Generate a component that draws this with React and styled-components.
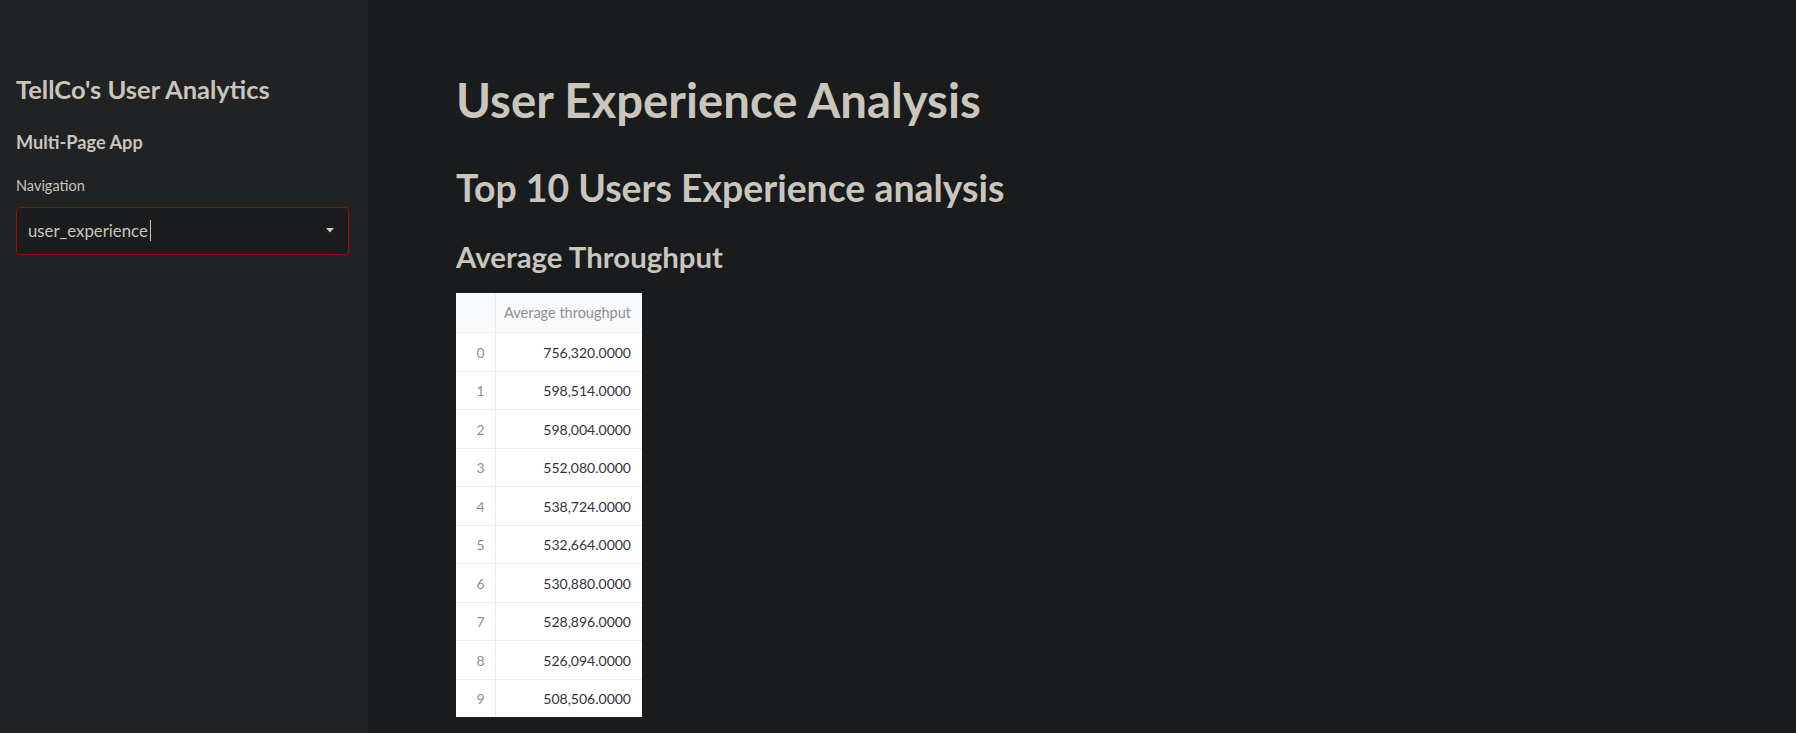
import React from 'react';
import styled, { createGlobalStyle } from 'styled-components';

const GlobalStyle = createGlobalStyle`
html, body {
    margin: 0;
    padding: 0;
    background: #1a1b1d;
}
body {
    font-family: "Lato", "Noto Sans", sans-serif;
    color: #c9c4bc;
}
`;

const Page = styled.div`
display: flex;
min-height: 733px;
width: 1796px;
`;

const Sidebar = styled.aside`
width: 368px;
flex-shrink: 0;
background: #212224;
padding: 74px 19px 0 16px;
box-sizing: border-box;
`;

const SideTitle = styled.h2`
margin: 0;
font-size: 25.5px;
line-height: 1.2;
font-weight: 700;
color: #c9c4bc;
`;

const SideSubtitle = styled.h3`
margin: 27px 0 0;
font-size: 18.2px;
line-height: 1.2;
font-weight: 700;
color: #c9c4bc;
`;

const Label = styled.div`
margin-top: 24px;
font-size: 14.5px;
line-height: 1.2;
color: #c9c4bc;
`;

const Select = styled.div`
margin-top: 12px;
height: 48px;
box-sizing: border-box;
border: 1px solid #9b0b0b;
border-radius: 4px;
background: #1b1c1e;
display: flex;
align-items: center;
padding: 0 14px 0 11px;
font-size: 16.8px;
color: #c9c4bc;
`;

const Value = styled.span`
flex: 1;
display: flex;
align-items: center;
`;

const Cursor = styled.span`
display: inline-block;
width: 1px;
height: 21px;
margin-left: 2px;
background: #c9c4bc;
`;

const Main = styled.main`
flex: 1;
padding: 72px 0 0 88px;
`;

const H1 = styled.h1`
margin: 0;
font-size: 47.3px;
line-height: 1.2;
font-weight: 700;
color: #cac6be;
`;

const H2 = styled.h2`
margin: 37px 0 0;
font-size: 37.4px;
line-height: 1.2;
font-weight: 700;
color: #cac6be;
`;

const H3 = styled.h3`
margin: 28px 0 0;
font-size: 29.4px;
line-height: 1.2;
font-weight: 700;
color: #cac6be;
`;

const Table = styled.table`
margin-top: 19px;
border-collapse: collapse;
background: #ffffff;
font-size: 14px;
width: 186px;
`;

const HeadCell = styled.th`
height: 40px;
padding: 0 11px 0 8px;
background: #f8f9fb;
color: #8d8f98;
font-size: 14.5px;
font-weight: 400;
text-align: right;
white-space: nowrap;
border-left: ${p => (p.$index ? 'none' : '1px solid #ebedf0')};
width: ${p => (p.$index ? '39px' : 'auto')};
box-sizing: border-box;
`;

const Row = styled.tr`
border-top: 1px solid #ebedf0;
`;

const Cell = styled.td`
height: 37.5px;
padding: 0 ${p => (p.$index ? '10px' : '11px')} 0 0;
text-align: right;
color: ${p => (p.$index ? '#8d8f98' : '#31333f')};
border-left: ${p => (p.$index ? 'none' : '1px solid #ebedf0')};
white-space: nowrap;
`;

const Caret = () => (
    <svg width="8" height="5" viewBox="0 0 8 5">
        <path d="M0 0 L8 0 L4 4.5 Z" fill="#d2cec7" />
    </svg>
);

const values = [
    '756,320.0000',
    '598,514.0000',
    '598,004.0000',
    '552,080.0000',
    '538,724.0000',
    '532,664.0000',
    '530,880.0000',
    '528,896.0000',
    '526,094.0000',
    '508,506.0000',
];

export default function App() {
    return (
        <Page>
            <GlobalStyle />
            <Sidebar>
                <SideTitle>TellCo's User Analytics</SideTitle>
                <SideSubtitle>Multi-Page App</SideSubtitle>
                <Label>Navigation</Label>
                <Select>
                    <Value>
                        user_experience
                        <Cursor />
                    </Value>
                    <Caret />
                </Select>
            </Sidebar>
            <Main>
                <H1>User Experience Analysis</H1>
                <H2>Top 10 Users Experience analysis</H2>
                <H3>Average Throughput</H3>
                <Table>
                    <thead>
                        <tr>
                            <HeadCell $index></HeadCell>
                            <HeadCell>Average throughput</HeadCell>
                        </tr>
                    </thead>
                    <tbody>
                        {values.map((v, i) => (
                            <Row key={i}>
                                <Cell $index>{i}</Cell>
                                <Cell>{v}</Cell>
                            </Row>
                        ))}
                    </tbody>
                </Table>
            </Main>
        </Page>
    );
}
